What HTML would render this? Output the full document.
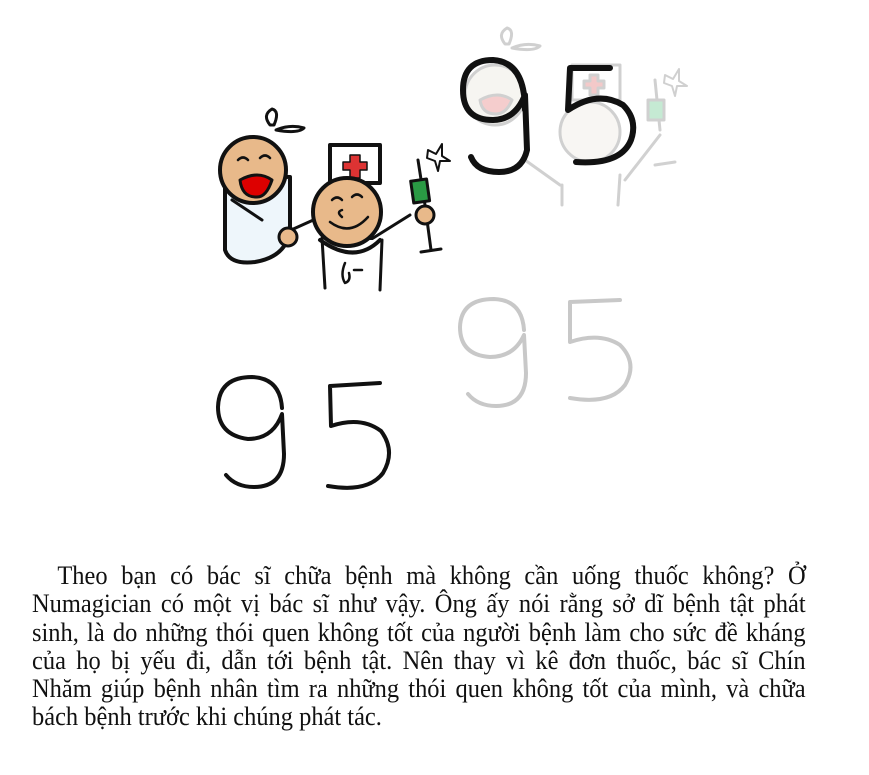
<!DOCTYPE html>
<html><head><meta charset="utf-8"><style>
html,body{margin:0;padding:0;background:#fff;width:869px;height:775px;overflow:hidden}
svg{position:absolute;left:0;top:0}
#t{position:absolute;left:32px;top:562px;width:823px;transform:scaleX(0.94);transform-origin:0 0;font-family:"Liberation Serif",serif;font-size:26px;line-height:28.3px;color:#111}
#t div{text-align:justify;text-align-last:justify;white-space:nowrap}
#t div.l{text-align-last:left}
</style></head><body>
<svg width="869" height="540" viewBox="0 0 869 540" fill="none" stroke-linecap="round" stroke-linejoin="round">
<g stroke="#111" stroke-width="4">
 <path d="M270 125 q-8-10 2-16 q8 2 2 16 z M276 130 q14-6 28-2 q-6 6-28 2z" stroke-width="3"/>
 <path d="M225 175 l0 75 q5 15 30 12 q30-5 35-30 l0-55 z" fill="#eef6fb"/>
 <circle cx="253" cy="170" r="33" fill="#e8b98a"/>
 <path d="M240 180 q18-10 32 0 q-6 18-16 17 q-14 0-16-17z" fill="#d00" stroke-width="3"/>
 <path d="M238 160 q5-5 10 0 M260 158 q5-5 10 0" stroke-width="2.5"/>
 <path d="M232 200 l30 20" stroke-width="3"/>
 <path d="M280 235 l40-18 M410 215 l-40 25 M325 288 l-3-50 M380 290 l2-50" stroke-width="3"/>
 <path d="M320 240 q35 25 60 0" fill="#fff"/>
 <circle cx="288" cy="237" r="9" fill="#e8b98a" stroke-width="3"/>
 <rect x="330" y="145" width="50" height="38" fill="#fff"/>
 <path d="M350 155 h10 v7 h7 v8 h-7 v8 h-10 v-8 h-7 v-8 h7z" fill="#d33" stroke-width="1.5"/>
 <circle cx="347" cy="212" r="34" fill="#e8b98a"/>
 <path d="M332 200 q5-5 10 0 M352 197 q5-5 10 0 M330 222 q20 15 38 -5 M342 210 q-6 2 0 7" stroke-width="2.5"/>
 <path d="M418 160 l7 45 M425 205 l6 45 M421 252 l20-3" stroke-width="3"/>
 <rect x="412" y="180" width="16" height="22" fill="#2a9a44" stroke-width="3" transform="rotate(-8 420 190)"/>
 <circle cx="425" cy="215" r="9" fill="#e8b98a" stroke-width="3"/>
 <path d="M428 150 l8 4 l6-10 l0 12 l8 5 l-10 0 l-2 10 l-3-10 l-8-3z" stroke-width="2"/>
 <path d="M345 263 q-5 12 0 20 q6-2 4-10 M354 270 h8" stroke-width="2.5"/>
</g>
<g stroke="#ccc" stroke-width="3" opacity="0.9">
 <path d="M505 44 q-8-10 2-16 q8 2 2 16z M512 48 q14-6 28-2 q-6 6-28 2z"/>
 <circle cx="495" cy="95" r="30" fill="#f6f4f0"/>
 <path d="M480 100 q18-10 32 0 q-6 14-16 14 q-14 0-16-14z" fill="#f4c8c8"/>
 <circle cx="590" cy="132" r="30" fill="#f8f6f2"/>
 <rect x="572" y="65" width="48" height="35" fill="#fff"/>
 <path d="M590 75 h8 v6 h6 v7 h-6 v7 h-8 v-7 h-6 v-7 h6z" fill="#f2c4c4"/>
 <path d="M525 160 l35 25 M660 135 l-35 45 M562 205 l0-20 M618 205 l2-30 M655 80 l5 50 M655 165 l20-3"/>
 <rect x="648" y="100" width="16" height="20" fill="#bfe8cf"/>
 <path d="M665 75 l8 4 l6-10 l0 12 l8 5 l-10 0 l-2 10 l-3-10 l-8-3z" stroke-width="2"/>
</g>
<g stroke="#111" stroke-width="6">
 <path d="M525 110 q0-48-32-50 q-30 0-30 30 q0 30 30 30 q22 0 32-25 l2 55 q-5 22-28 22 q-22 0-28-15"/>
 <path d="M610 68 l-40 0 l-2 42 q30-20 55-5 q15 15 8 35 q-10 25-55 22"/>
</g>
<g stroke="#111" stroke-width="4">
 <path d="M282 408 q-2-30-30-31 q-33 0-34 30 q0 28 30 32 q25 0 34-25 l2 40 q0 33-30 33 q-18 0-28-12"/>
 <path d="M380 383 l-50 3 l1 40 q30-10 50 5 q15 20 2 42 q-15 20-55 13"/>
</g>
<g stroke="#c8c8c8" stroke-width="4">
 <path d="M524 330 q-2-30-30-31 q-33 0-34 28 q0 28 30 30 q24 0 34-22 l2 38 q0 33-30 33 q-18 0-28-12"/>
 <path d="M620 300 l-50 2 l0 40 q30-10 50 3 q18 18 5 40 q-15 20-55 13"/>
</g>
</svg>
<div id="t">
<div style="padding-left:27px">Theo bạn có bác sĩ chữa bệnh mà không cần uống thuốc không? Ở</div>
<div>Numagician có một vị bác sĩ như vậy. Ông ấy nói rằng sở dĩ bệnh tật phát</div>
<div>sinh, là do những thói quen không tốt của người bệnh làm cho sức đề kháng</div>
<div>của họ bị yếu đi, dẫn tới bệnh tật. Nên thay vì kê đơn thuốc, bác sĩ Chín</div>
<div>Nhăm giúp bệnh nhân tìm ra những thói quen không tốt của mình, và chữa</div>
<div class="l">bách bệnh trước khi chúng phát tác.</div>
</div>
</body></html>
